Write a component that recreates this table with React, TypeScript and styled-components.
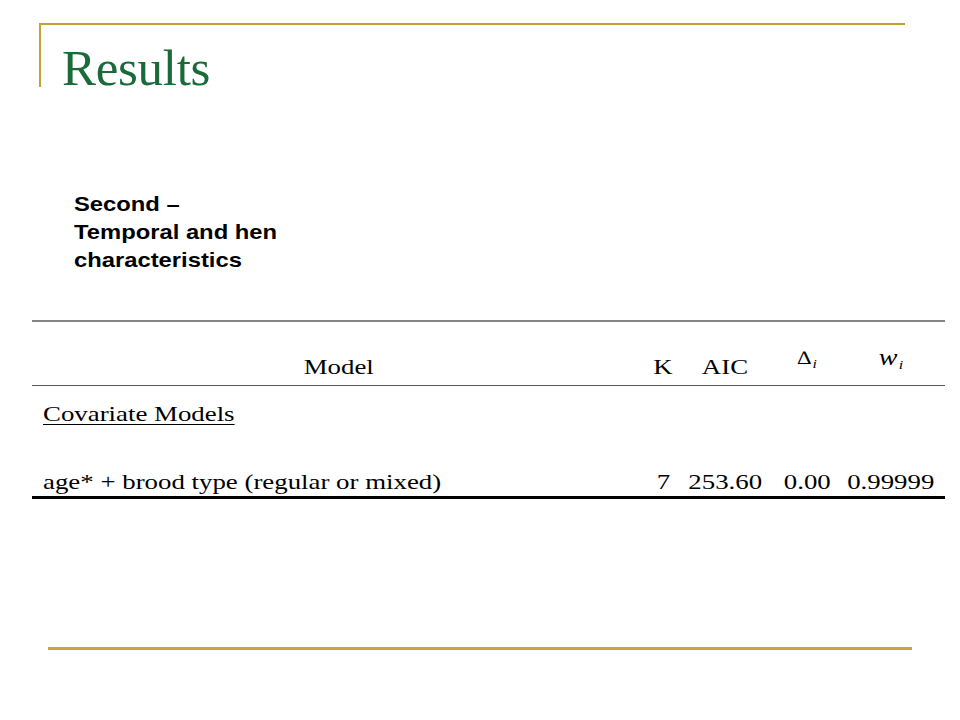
import React from "react";
import styled, { createGlobalStyle } from "styled-components";

const Global = createGlobalStyle`
  html, body { margin: 0; padding: 0; background: #ffffff; }
  body { font-family: "Liberation Serif", "Times New Roman", serif; }
`;

const Slide = styled.div`
  width: 960px;
  height: 720px;
  background: #ffffff;
  display: flex;
  flex-direction: column;
  overflow: hidden;
`;

const TitleFrame = styled.header`
  box-sizing: border-box;
  margin: 23px 0 0 39px;
  width: 866px;
  height: 64px;
  border-top: 2px solid #c4a232;
  border-left: 2px solid #c4a232;
  padding: 18px 0 0 21px;
`;

const Title = styled.h1`
  margin: 0;
  font-family: "Liberation Serif", "Times New Roman", serif;
  font-weight: normal;
  font-size: 51px;
  line-height: 51px;
  color: #1b6a3a;
  letter-spacing: -0.3px;
`;

const Stretch = styled.span<{ $origin?: string; $sx?: number }>`
  display: inline-block;
  white-space: nowrap;
  transform: scaleX(${(p) => p.$sx ?? 1.22});
  transform-origin: ${(p) => p.$origin ?? "center"};
`;

const Note = styled.div`
  margin: 103px 0 0 74px;
  font-family: "Liberation Sans", Arial, sans-serif;
  font-weight: bold;
  font-size: 20.5px;
  line-height: 28px;
  color: #000000;
`;

const Table = styled.div`
  margin: 46px 0 0 32px;
  width: 913px;
  font-family: "Liberation Serif", "Times New Roman", serif;
  font-size: 22px;
  line-height: 22px;
  color: #000000;
  border-top: 2px solid #858585;
  border-bottom: 3px solid #000000;
`;

const Row = styled.div<{ $height?: number; $pt?: number; $pb?: number; $rule?: boolean }>`
  display: grid;
  grid-template-columns: 613px 36px 88px 76px 92px 8px;
  box-sizing: border-box;
  height: ${(p) => (p.$height ? `${p.$height}px` : "auto")};
  padding-top: ${(p) => p.$pt ?? 0}px;
  padding-bottom: ${(p) => p.$pb ?? 0}px;
  align-items: end;
  border-bottom: ${(p) => (p.$rule ? "1.5px solid #5a5a5a" : "none")};
`;

const Cell = styled.div<{ $align?: "left" | "center" | "right"; $raise?: number; $indent?: number }>`
  text-align: ${(p) => p.$align ?? "center"};
  padding-bottom: ${(p) => p.$raise ?? 0}px;
  padding-left: ${(p) => p.$indent ?? 0}px;
  white-space: nowrap;
`;

const Underlined = styled.span`
  text-decoration: underline;
  text-decoration-thickness: 1px;
  text-underline-offset: 3px;
`;

const Delta = styled.span`
  font-size: 19px;
  font-weight: 300;
`;

const Italic = styled.span`
  font-style: italic;
  font-size: 23px;
`;

const Sub = styled.span`
  font-style: italic;
  font-size: 13px;
  vertical-align: -4px;
  margin-left: 1px;
`;

const FooterRule = styled.div`
  margin: 148px 0 0 48px;
  width: 864px;
  height: 2.5px;
  background: #c9a536;
`;

export default function App() {
  return (
    <>
      <Global />
      <Slide>
        <TitleFrame>
          <Title>Results</Title>
        </TitleFrame>

        <Note>
          <Stretch $origin="left" $sx={1.16}>
            Second –<br />
            Temporal and hen<br />
            characteristics
          </Stretch>
        </Note>

        <Table>
          <Row $height={64} $rule>
            <Cell $raise={7}>
              <Stretch>Model</Stretch>
            </Cell>
            <Cell $raise={7}>
              <Stretch>K</Stretch>
            </Cell>
            <Cell $raise={7}>
              <Stretch>AIC</Stretch>
            </Cell>
            <Cell $raise={10}>
              <Stretch $sx={1.2}>
                <Delta>∆</Delta>
                <Sub>i</Sub>
              </Stretch>
            </Cell>
            <Cell $raise={9}>
              <Stretch>
                <Italic>w</Italic>
                <Sub>i</Sub>
              </Stretch>
            </Cell>
            <Cell />
          </Row>
          <Row $pt={17}>
            <Cell $align="left" $indent={11}>
              <Stretch $origin="left">
                <Underlined>Covariate Models</Underlined>
              </Stretch>
            </Cell>
          </Row>
          <Row $pt={46} $pb={3}>
            <Cell $align="left" $indent={11}>
              <Stretch $origin="left">age* + brood type (regular or mixed)</Stretch>
            </Cell>
            <Cell>
              <Stretch>7</Stretch>
            </Cell>
            <Cell>
              <Stretch>253.60</Stretch>
            </Cell>
            <Cell>
              <Stretch>0.00</Stretch>
            </Cell>
            <Cell>
              <Stretch>0.99999</Stretch>
            </Cell>
            <Cell />
          </Row>
        </Table>

        <FooterRule />
      </Slide>
    </>
  );
}
